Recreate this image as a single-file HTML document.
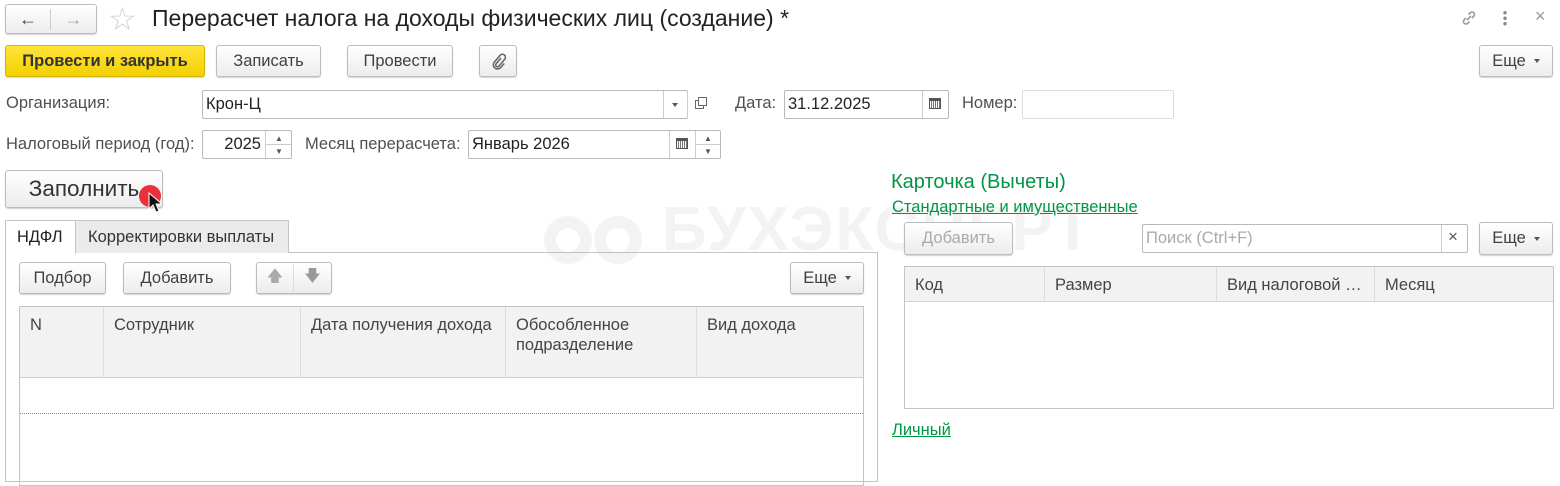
<!DOCTYPE html>
<html><head><meta charset="utf-8">
<style>
*{box-sizing:border-box;margin:0;padding:0}
body{width:1560px;height:471px;overflow:hidden;background:#fff;font-family:"Liberation Sans",Arial,sans-serif;color:#333;font-size:16.5px;position:relative}
.a{position:absolute}
.btn{position:absolute;border:1px solid #bcbcbc;border-radius:3px;background:linear-gradient(#fff,#ececec);box-shadow:0 1px 1px rgba(0,0,0,.18);display:flex;align-items:center;justify-content:center;color:#404040;font-size:16.5px}
.inp{position:absolute;border:1px solid #b9b9b9;border-radius:2px;background:#fff;font-size:16.5px;color:#222;display:flex;align-items:center;padding-left:3px}
.lbl{position:absolute;font-size:16.5px;color:#505050}
.cell{position:absolute;top:0;height:100%;border-left:1px solid #dcdcdc;padding:8px 10px;color:#444;font-size:16.5px;line-height:20px}
.grn{color:#009646}
.tri{display:inline-block;width:0;height:0;border-left:3px solid transparent;border-right:3px solid transparent;border-top:4px solid #555;margin-left:8px;vertical-align:middle}
</style></head><body>

<!-- watermark -->
<div class="a" style="left:662px;top:195px;font-size:62px;font-weight:bold;color:#f3f3f3;letter-spacing:2px;line-height:70px">БУХЭКСПЕРТ</div>
<svg class="a" style="left:530px;top:200px" width="120" height="70"><g fill="none" stroke="#f3f3f3" stroke-width="12"><circle cx="38" cy="40" r="18"/><circle cx="88" cy="40" r="18"/></g></svg>

<!-- nav -->
<div class="btn" style="left:5px;top:4px;width:92px;height:30px;padding:0"><div style="width:46px;text-align:center;border-right:1px solid #ccc;font-size:18px;font-weight:bold;color:#444">&#8592;</div><div style="width:46px;text-align:center;font-size:18px;font-weight:bold;color:#aaa">&#8594;</div></div>
<div class="a" style="left:108px;top:1px;font-size:32px;color:#cfcfcf;line-height:36px">&#9734;</div>
<div class="a" style="left:152px;top:4px;font-size:23px;color:#222;line-height:28px">Перерасчет налога на доходы физических лиц (создание) *</div>
<svg class="a" style="left:1459px;top:8px" width="20" height="20" fill="none" stroke="#999" stroke-width="1.6"><path d="M8 12l4-4M7 10l-2 2a2.5 2.5 0 0 0 3.5 3.5l2-2M13 10l2-2a2.5 2.5 0 0 0-3.5-3.5l-2 2"/></svg>
<div class="a" style="left:1503px;top:10px;width:4px;height:16px;background:radial-gradient(circle,#888 1.5px,transparent 2px) 0 0/4px 5.5px"></div>
<div class="a" style="left:1535px;top:6px;font-size:18px;color:#999">×</div>

<!-- toolbar -->
<div class="btn" style="left:5px;top:45px;width:200px;height:32px;background:linear-gradient(#ffe43a,#f4d000);border-color:#d4b500;font-weight:bold;color:#333">Провести и закрыть</div>
<div class="btn" style="left:216px;top:45px;width:105px;height:32px">Записать</div>
<div class="btn" style="left:347px;top:45px;width:106px;height:32px">Провести</div>
<div class="btn" style="left:479px;top:45px;width:38px;height:32px"><svg width="16" height="18" fill="none" stroke="#666" stroke-width="1.6"><path d="M11 6l-5 6a1.8 1.8 0 0 0 2.6 2.4l6-7a3 3 0 0 0-4.4-4.2l-6 7a4.2 4.2 0 0 0 6 5.8l4-4.5"/></svg></div>
<div class="btn" style="left:1479px;top:45px;width:74px;height:32px">Еще<span class="tri"></span></div>

<!-- row org -->
<div class="lbl" style="left:6px;top:94px">Организация:</div>
<div class="inp" style="left:202px;top:90px;width:486px;height:29px">Крон-Ц</div>
<div class="a" style="left:663px;top:91px;width:1px;height:27px;background:#ccc"></div>
<div class="a" style="left:663px;top:91px;width:24px;height:27px;display:flex;align-items:center;justify-content:center"><span class="tri" style="margin:0"></span></div>
<div class="a" style="left:687px;top:91px;width:1px;height:27px;background:#ccc"></div>
<div class="a" style="left:695px;top:100px;width:9px;height:9px;border:1px solid #666;background:#fff"></div>
<div class="a" style="left:698px;top:97px;width:9px;height:9px;border:1px solid #666;background:#fff"></div>
<div class="lbl" style="left:735px;top:94px">Дата:</div>
<div class="inp" style="left:784px;top:90px;width:165px;height:29px">31.12.2025</div>
<div class="a" style="left:922px;top:91px;width:1px;height:27px;background:#ccc"></div>
<div class="a" style="left:929px;top:98px;width:12px;height:11px;border:1px solid #555;border-top:3px solid #555;background:repeating-linear-gradient(90deg,#fff 0 1px,#777 1px 2px)"></div>
<div class="lbl" style="left:962px;top:94px">Номер:</div>
<div class="inp" style="left:1022px;top:90px;width:152px;height:29px;border-color:#ddd"></div>

<!-- row period -->
<div class="lbl" style="left:6px;top:135px">Налоговый период (год):</div>
<div class="inp" style="left:202px;top:130px;width:90px;height:29px;justify-content:flex-end;padding-right:30px">2025</div>
<div class="a" style="left:265px;top:131px;width:1px;height:27px;background:#ccc"></div>
<div class="a" style="left:266px;top:144px;width:25px;height:1px;background:#ccc"></div>
<div class="a" style="left:275px;top:134px;font-size:8px;color:#555">▲</div>
<div class="a" style="left:275px;top:147px;font-size:8px;color:#555">▼</div>
<div class="lbl" style="left:305px;top:135px">Месяц перерасчета:</div>
<div class="inp" style="left:468px;top:130px;width:253px;height:29px">Январь 2026</div>
<div class="a" style="left:669px;top:131px;width:1px;height:27px;background:#ccc"></div>
<div class="a" style="left:676px;top:138px;width:12px;height:11px;border:1px solid #555;border-top:3px solid #555;background:repeating-linear-gradient(90deg,#fff 0 1px,#777 1px 2px)"></div>
<div class="a" style="left:695px;top:131px;width:1px;height:27px;background:#ccc"></div>
<div class="a" style="left:696px;top:144px;width:24px;height:1px;background:#ccc"></div>
<div class="a" style="left:704px;top:134px;font-size:8px;color:#555">▲</div>
<div class="a" style="left:704px;top:147px;font-size:8px;color:#555">▼</div>

<!-- fill -->
<div class="btn" style="left:5px;top:170px;width:158px;height:38px;font-size:22.5px;color:#333">Заполнить</div>
<div class="a" style="left:139px;top:185px;width:22px;height:22px;border-radius:50%;background:#e8313a"></div>
<svg class="a" style="left:148px;top:192px" width="14" height="22"><path d="M1 1v16l4-4 3 7 3-1-3-7h6z" fill="#111" stroke="#fff" stroke-width="1"/></svg>

<!-- tabs -->
<div class="a" style="left:5px;top:252px;width:873px;height:230px;border:1px solid #c4c4c4"></div>
<div class="a" style="left:75px;top:220px;width:214px;height:33px;background:#ebebeb;border:1px solid #c4c4c4;border-bottom:none;display:flex;align-items:center;padding-left:12px;font-size:16.5px;color:#333">Корректировки выплаты</div>
<div class="a" style="left:5px;top:220px;width:71px;height:34px;background:#fff;border:1px solid #c4c4c4;border-bottom:none;display:flex;align-items:center;padding-left:11px;font-size:16.5px;color:#222">НДФЛ</div>

<div class="btn" style="left:19px;top:262px;width:87px;height:32px">Подбор</div>
<div class="btn" style="left:123px;top:262px;width:108px;height:32px">Добавить</div>
<div class="btn" style="left:256px;top:262px;width:76px;height:32px;padding:0"><div style="width:38px;text-align:center;border-right:1px solid #ddd;color:#aaa;font-size:16px">🡅</div><div style="width:38px;text-align:center;color:#999;font-size:16px">🡇</div></div>
<div class="btn" style="left:790px;top:262px;width:74px;height:32px">Еще<span class="tri"></span></div>

<div class="a" style="left:19px;top:306px;width:845px;height:180px;border:1px solid #c4c4c4"></div>
<div class="a" style="left:20px;top:307px;width:843px;height:71px;background:#f2f2f2;border-bottom:1px solid #cfcfcf">
<div class="cell" style="left:0;border:none">N</div>
<div class="cell" style="left:83px">Сотрудник</div>
<div class="cell" style="left:280px">Дата получения дохода</div>
<div class="cell" style="left:485px">Обособленное<br>подразделение</div>
<div class="cell" style="left:676px">Вид дохода</div>
</div>
<div class="a" style="left:20px;top:413px;width:843px;border-top:1px dotted #888"></div>

<!-- right -->
<div class="a grn" style="left:891px;top:171px;font-size:20px">Карточка (Вычеты)</div>
<div class="a grn" style="left:892px;top:198px;font-size:16.5px;text-decoration:underline">Стандартные и имущественные</div>
<div class="btn" style="left:904px;top:222px;width:109px;height:33px;color:#aaa">Добавить</div>
<div class="inp" style="left:1142px;top:224px;width:326px;height:29px;color:#aaa">Поиск (Ctrl+F)</div>
<div class="a" style="left:1441px;top:225px;width:1px;height:27px;background:#ccc"></div>
<div class="a" style="left:1448px;top:227px;font-size:17px;color:#555">×</div>
<div class="btn" style="left:1479px;top:222px;width:74px;height:33px">Еще<span class="tri"></span></div>

<div class="a" style="left:904px;top:266px;width:650px;height:143px;border:1px solid #c4c4c4"></div>
<div class="a" style="left:905px;top:267px;width:648px;height:35px;background:#f2f2f2;border-bottom:1px solid #d4d4d4">
<div class="cell" style="left:0;border:none">Код</div>
<div class="cell" style="left:139px">Размер</div>
<div class="cell" style="left:311px">Вид налоговой …</div>
<div class="cell" style="left:469px">Месяц</div>
</div>
<div class="a grn" style="left:892px;top:421px;font-size:16.5px;text-decoration:underline">Личный</div>

</body></html>
